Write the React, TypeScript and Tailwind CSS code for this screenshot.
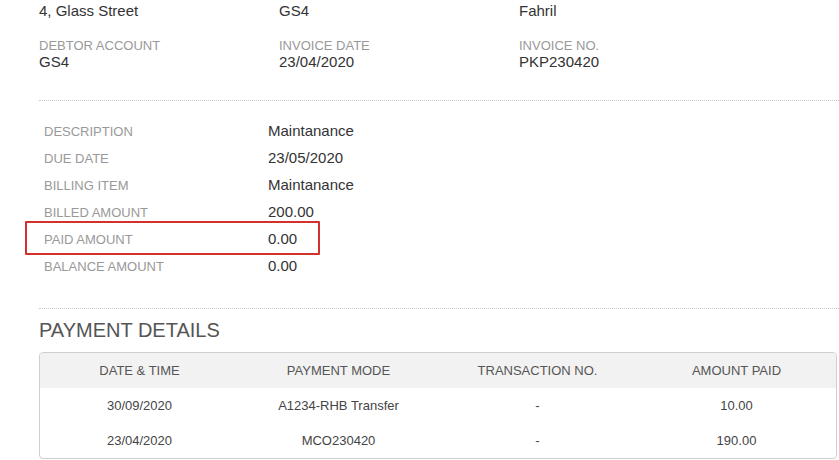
import React from "react";

const top = [
  { label: "", value: "4, Glass Street" },
  { label: "", value: "GS4" },
  { label: "", value: "Fahril" },
];

const second = [
  { label: "DEBTOR ACCOUNT", value: "GS4" },
  { label: "INVOICE DATE", value: "23/04/2020" },
  { label: "INVOICE NO.", value: "PKP230420" },
];

const details = [
  ["DESCRIPTION", "Maintanance"],
  ["DUE DATE", "23/05/2020"],
  ["BILLING ITEM", "Maintanance"],
  ["BILLED AMOUNT", "200.00"],
  ["PAID AMOUNT", "0.00"],
  ["BALANCE AMOUNT", "0.00"],
];

const payments = [
  ["30/09/2020", "A1234-RHB Transfer", "-", "10.00"],
  ["23/04/2020", "MCO230420", "-", "190.00"],
];

export default function App() {
  return (
    <div
      className="relative w-[839px] h-[460px] overflow-hidden bg-white text-[#333]"
      style={{ fontFamily: '"Liberation Sans", Arial, sans-serif' }}
    >
      <div className="pl-[39px]">
        <div className="grid grid-cols-[240px_240px_1fr] mt-[2px] text-[15px] leading-[18px]">
          {top.map((t, i) => (
            <div key={i}>{t.value}</div>
          ))}
        </div>
        <div className="grid grid-cols-[240px_240px_1fr] mt-[18px]">
          {second.map((t, i) => (
            <div key={i} className="flex flex-col">
              <span className="text-[13px] leading-[15px] text-[#999]">{t.label}</span>
              <span className="text-[15px] leading-[18px]">{t.value}</span>
            </div>
          ))}
        </div>
        <div className="mt-[29px] border-t border-dotted border-[#c8c8c8]" />
        <div className="pt-[17px] pl-[5px]">
          {details.map(([l, v]) => (
            <div key={l} className="flex items-center h-[27px]">
              <span className="w-[224px] text-[13px] text-[#999]">{l}</span>
              <span className="text-[15px]">{v}</span>
            </div>
          ))}
        </div>
        <div className="mt-[28px] border-t border-dotted border-[#c8c8c8]" />
        <div className="mt-[9px] text-[20px] leading-[24px] text-[#555]">PAYMENT DETAILS</div>
        <div className="mt-[10px] mr-[2px] border border-[#cfcfcf] rounded-[4px] overflow-hidden text-[13px] text-[#555]">
          <div className="grid grid-cols-4 h-[35px] items-center bg-[#f2f2f2] text-center">
            <div>DATE &amp; TIME</div>
            <div>PAYMENT MODE</div>
            <div>TRANSACTION NO.</div>
            <div>AMOUNT PAID</div>
          </div>
          {payments.map((r, i) => (
            <div key={i} className="grid grid-cols-4 h-[35px] items-center text-center text-[#444]">
              {r.map((c, j) => (
                <div key={j}>{c}</div>
              ))}
            </div>
          ))}
        </div>
      </div>
      <div className="absolute left-[25px] top-[221px] w-[295px] h-[34px] border-2 border-[#d3312c] rounded-[1px]" />
    </div>
  );
}
